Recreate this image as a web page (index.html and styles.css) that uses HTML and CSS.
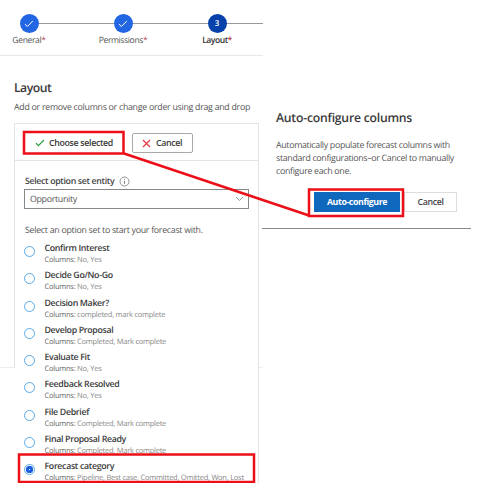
FILE: index.html
```html
<!DOCTYPE html>
<html lang="en">
<head>
<meta charset="utf-8">
<title>Forecast layout</title>
<link rel="stylesheet" href="styles.css">
</head>
<body>
<main class="page">
  <section class="editor">
    <nav class="stepper">
      <div class="step"><span class="dot"><svg width="10" height="8" viewBox="0 0 10 8"><path d="M1 4.2 3.4 6.5 8.8 1"/></svg></span><span class="name">General<i>*</i></span></div>
      <div class="step"><span class="dot"><svg width="10" height="8" viewBox="0 0 10 8"><path d="M1 4.2 3.4 6.5 8.8 1"/></svg></span><span class="name">Permissions<i>*</i></span></div>
      <div class="step current"><span class="dot">3</span><span class="name">Layout<i>*</i></span></div>
    </nav>
    <h1>Layout</h1>
    <p class="lead">Add or remove columns or change order using drag and drop</p>
    <div class="body">
      <div class="rail"></div>
      <div class="panel">
        <div class="toolbar">
          <button class="choose"><svg width="10" height="8" viewBox="0 0 10 8"><path d="M1 4.2 3.4 6.6 9 1"/></svg><span>Choose selected</span></button>
          <button class="cancel"><svg width="9" height="9" viewBox="0 0 9 9"><path d="m1 1 7 7M8 1 1 8"/></svg><span>Cancel</span></button>
        </div>
        <div class="label"><span>Select option set entity</span><svg width="11" height="11" viewBox="0 0 11 11"><circle cx="5.5" cy="5.5" r="4.5" stroke="#777" stroke-width=".8"/><path d="M5.5 4.8v3M5.5 2.8v1" stroke="#888"/></svg></div>
        <div class="select"><span>Opportunity</span><svg width="9" height="6" viewBox="0 0 9 6"><path d="m1 1 3.5 3.5L8 1" stroke="#999"/></svg></div>
        <p class="prompt">Select an option set to start your forecast with.</p>
        <ul class="options">
          <li><b class="radio"></b><div><strong>Confirm Interest</strong><small><em>Columns:</em> No, Yes</small></div></li>
          <li><b class="radio"></b><div><strong>Decide Go/No-Go</strong><small><em>Columns:</em> No, Yes</small></div></li>
          <li><b class="radio"></b><div><strong>Decision Maker?</strong><small><em>Columns:</em> completed, mark complete</small></div></li>
          <li><b class="radio"></b><div><strong>Develop Proposal</strong><small><em>Columns:</em> Completed, Mark complete</small></div></li>
          <li><b class="radio"></b><div><strong>Evaluate Fit</strong><small><em>Columns:</em> No, Yes</small></div></li>
          <li><b class="radio"></b><div><strong>Feedback Resolved</strong><small><em>Columns:</em> No, Yes</small></div></li>
          <li><b class="radio"></b><div><strong>File Debrief</strong><small><em>Columns:</em> Completed, Mark complete</small></div></li>
          <li><b class="radio"></b><div><strong>Final Proposal Ready</strong><small><em>Columns:</em> Completed, Mark complete</small></div></li>
          <li><b class="radio on"></b><div><strong>Forecast category</strong><small><em>Columns:</em> Pipeline, Best case, Committed, Omitted, Won, Lost</small></div></li>
        </ul>
      </div>
      <div class="rail"></div>
    </div>
  </section>
  <section class="dialog">
    <h2>Auto-configure columns</h2>
    <p>Automatically populate forecast columns with<br>standard configurations–or Cancel to manually<br>configure each one.</p>
    <div class="actions"><button class="primary">Auto-configure</button><button class="secondary">Cancel</button></div>
  </section>
</main>
<svg class="callouts" width="498" height="483" viewBox="0 0 498 483">
  <rect x="24" y="132" width="99.5" height="21.5"/>
  <path d="M124 153.500 309 215.500"/>
  <rect x="309" y="189.500" width="94" height="26.500"/>
  <rect x="19" y="454.500" width="235" height="27.500"/>
</svg>
</body>
</html>
```

FILE: styles.css
```css
* { box-sizing: border-box; }
body { margin: 0; background: #fff; color: #333; font-family: "Open Sans", "Noto Sans", sans-serif; font-size: 8.800px; letter-spacing: -.3px; text-rendering: geometricPrecision; overflow: hidden; }
h1, h2, p, ul { margin: 0; padding: 0; }
svg { fill: none; flex: none; }
i, em { font-style: normal; }
button { font-family: inherit; letter-spacing: -.32px; padding: 0; display: flex; align-items: center; background: #fff; }
.page { display: flex; align-items: flex-start; width: 498px; height: 483px; overflow: hidden; }
.editor { width: 263px; height: 483px; flex: none; }
.stepper { display: flex; height: 56px; padding-top: 14px; border-bottom: 1px solid #e8e8e8; overflow: hidden; }
.step { flex: none; width: 94px; display: flex; flex-direction: column; align-items: center; background: linear-gradient(#999, #999) 0 9px / 100% 1px no-repeat; }
.step:first-child { margin-left: -18px; background-position: 47px 9px; }
.dot { width: 19px; height: 19px; border-radius: 50%; background: #2266e3; color: #fff; display: flex; align-items: center; justify-content: center; font-weight: 600; font-size: 8px; }
.dot svg { stroke: #fff; }
.current .dot { background: #0742ab; }
.name { line-height: 14px; color: #555; font-size: 8.600px; letter-spacing: -.38px; white-space: nowrap; }
.name i { color: #b5424b; }
.current .name { color: #333; font-weight: 600; letter-spacing: -.5px; }
h1 { margin: 23px 0 0 14px; font-size: 12.200px; line-height: 18px; font-weight: 600; letter-spacing: -.5px; color: #3a3a3a; }
.lead { margin: 3px 0 0 14px; line-height: 14px; color: #555; letter-spacing: -.27px; white-space: nowrap; }
.body { display: flex; margin-top: 9px; height: 360px; }
.rail { width: 14px; height: 245px; border-bottom: 1px solid #eee; flex: none; }
.rail:last-child { width: 4px; }
.panel { width: 245px; height: 360px; padding-left: 1px; border: solid #e4e4e4; border-width: 1px 1px 0 0; background: linear-gradient(#e4e4e4, #e4e4e4) 0 0 / 1px 244px no-repeat; flex: none; }
.toolbar { height: 37px; padding: 8px 0 0 9px; display: flex; gap: 9px; border-bottom: 1px solid #e4e4e4; align-items: flex-start; }
.toolbar button { font-size: 8.800px; font-weight: 600; color: #3a3a3a; border-radius: 2px; white-space: nowrap; }
.choose { width: 99px; height: 22px; padding-left: 11px; gap: 4px; border: 0; }
.choose path { stroke: #27a03d; stroke-width: 1.200; }
.cancel { width: 61px; height: 20px; margin-top: 1px; padding-left: 9px; gap: 5px; border: 1px solid #aaa; }
.cancel path { stroke: #e33640; stroke-width: 1.200; }
.label { display: flex; align-items: center; gap: 5px; height: 14px; margin: 13px 0 0 10px; font-weight: 600; letter-spacing: -.34px; color: #444; }
.select { display: flex; align-items: center; justify-content: space-between; width: 225px; height: 20px; margin: 1px 0 0 9px; padding: 0 4px 1px 5px; border: 1px solid #888; color: #555; }
.prompt { margin: 14px 0 0 10px; line-height: 14px; color: #555; letter-spacing: -.27px; white-space: nowrap; }
.options { list-style: none; margin: 4px 0 0 9px; }
.options li { display: flex; height: 27.250px; gap: 9.500px; }
.options strong, .options small { display: block; white-space: nowrap; }
.options strong { padding-top: 1px; font-size: 8.800px; line-height: 12px; height: 13px; font-weight: 600; letter-spacing: -.33px; color: #3a3a3a; }
.options small { padding-top: 1px; font-size: 7.500px; line-height: 11px; color: #888; letter-spacing: -.24px; }
.options em { color: #666; }
.radio { width: 11px; height: 11px; margin-top: 5px; border: 1px solid #5ba9e5; border-radius: 50%; flex: none; }
.radio.on { background: radial-gradient(circle, #fff 0 .4px, #1d5fdc 1px 3.400px, #fff 4px); }
.dialog { width: 209px; height: 229px; margin-left: -1px; padding: 109px 0 0 14px; border-bottom: 1px solid #888; flex: none; }
h2 { font-size: 12.200px; line-height: 18px; font-weight: 600; letter-spacing: -.22px; color: #3a3a3a; white-space: nowrap; }
.dialog p { margin-top: 12px; line-height: 12.800px; color: #555; white-space: nowrap; }
.actions { display: flex; gap: 4px; margin: 14.600px 0 0 38px; }
.actions button { height: 20px; justify-content: center; font-size: 8.800px; font-weight: 600; white-space: nowrap; }
.actions .primary { width: 86px; background: #1068bd; color: #fff; border: 0; font-weight: 700; letter-spacing: -.4px; }
.secondary { width: 53px; border: 1px solid #ddd; color: #444; }
.callouts { position: absolute; left: 0; top: 0; stroke: #ec0f18; stroke-width: 2.500; pointer-events: none; }
```
